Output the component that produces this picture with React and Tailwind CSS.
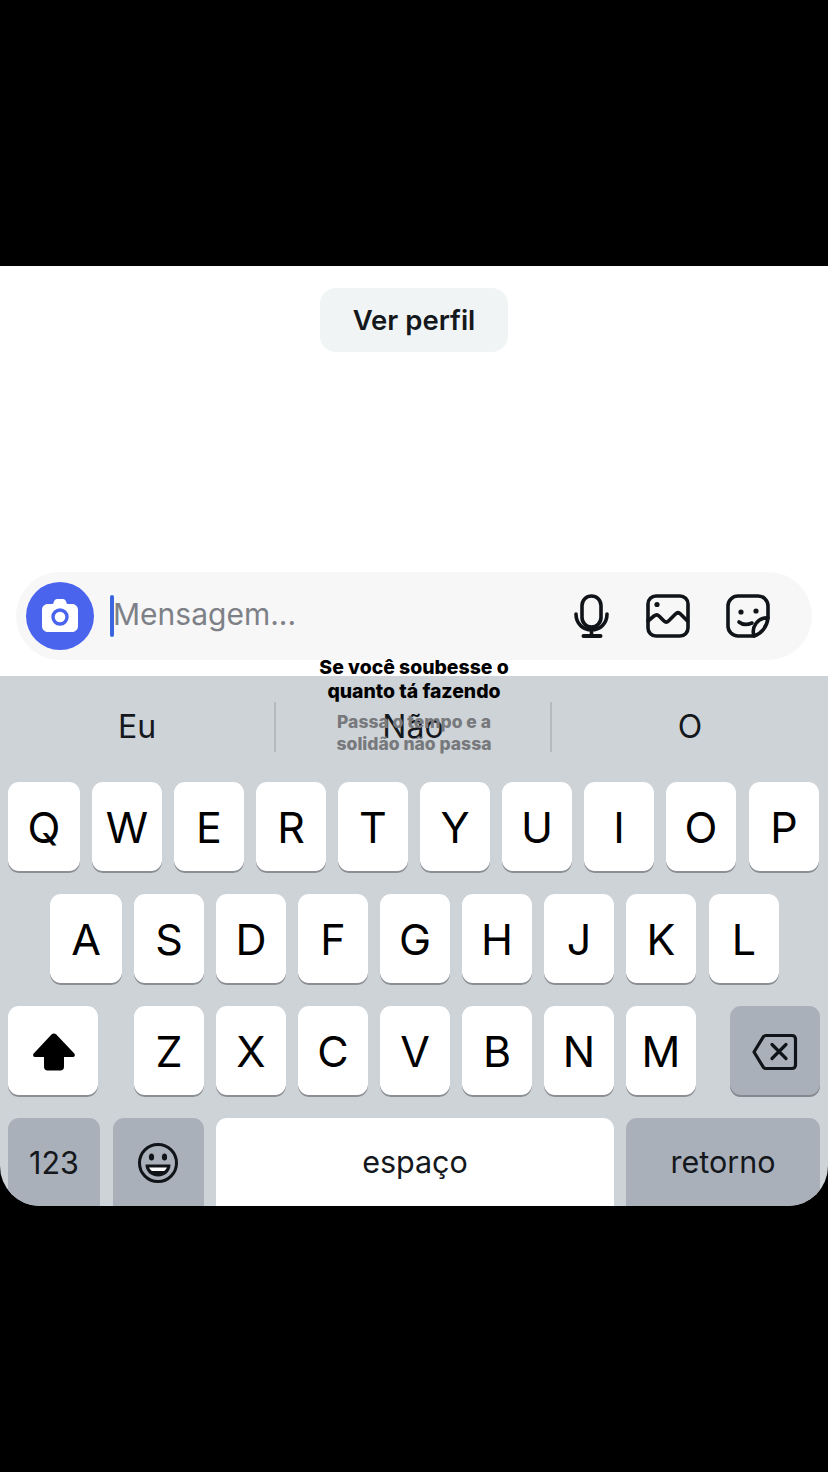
const row1 = ["W", "E", "R", "T", "Y", "U", "I", "O"];
const row2 = ["S", "D", "F", "G", "H", "J", "K"];
const row3 = ["Z", "X", "C", "V", "B", "N", "M"];

const Key = ({ label, wide }) => (
  <div className={`${wide ? "w-[72px]" : "w-[70px]"} h-[91px] flex items-center justify-center bg-white rounded-[11px] shadow-[inset_0_-2px_0_#8b8e93] text-[43px] text-black`}>
    {label}
  </div>
);

const MicIcon = () => (
  <svg width="36" height="44" viewBox="0 0 36 44" fill="none" stroke="#101418" strokeWidth="3.6" strokeLinecap="round">
    <rect x="8" y="2" width="19" height="31" rx="9.5" />
    <path d="M2 20c0 21 31 21 31 0" />
    <path d="M17.5 36v6" />
    <path d="M9.5 42h17" strokeWidth="4" />
  </svg>
);

const ImageIcon = () => (
  <svg width="44" height="44" viewBox="0 0 44 44" fill="none" stroke="#101418" strokeWidth="3.6" strokeLinecap="round" strokeLinejoin="round">
    <rect x="2" y="2" width="40" height="40" rx="8" />
    <circle cx="11" cy="10.5" r="2.6" fill="#101418" stroke="none" />
    <path d="M2 27l6-5c2-1.500 3.500-1.500 5 0l5 5c1.500 1.500 3 1.500 4.500 0l7-7c1.500-1.500 3.500-1.500 5 0l7 7" />
  </svg>
);

const StickerIcon = () => (
  <svg width="44" height="44" viewBox="0 0 44 44" fill="none" stroke="#101418" strokeWidth="3.6" strokeLinecap="round" strokeLinejoin="round">
    <path d="M28 42H12A10 10 0 0 1 2 32V12A10 10 0 0 1 12 2H32A10 10 0 0 1 42 12V24" />
    <path d="M42 24C41 33 35 40 28 42C25 33 32 23 42 24Z" />
    <circle cx="15" cy="18" r="2.6" fill="#101418" stroke="none" />
    <circle cx="30" cy="17" r="2.6" fill="#101418" stroke="none" />
    <path d="M13 28c3 2.500 8 3 13 1" />
  </svg>
);

const CameraIcon = () => (
  <svg width="38" height="36" viewBox="0 0 38 36" fill="none">
    <path d="M13 3.500C13.500 2 14.500 1 16 1h6c1.500 0 2.500 1 3 2.500L26 6h5c3.500 0 6 2.500 6 6v16c0 3.500-2.500 6-6 6H7c-3.500 0-6-2.500-6-6V12c0-3.500 2.500-6 6-6h5z" fill="#fff" />
    <circle cx="19" cy="19" r="7" stroke="#4a64ee" strokeWidth="3.4" />
  </svg>
);

const ShiftIcon = () => (
  <svg width="44" height="38" viewBox="0 0 44 38" fill="#000">
    <path d="M19.500 1.500c1.300-1.400 3.500-1.400 4.800 0l18 19c1.200 1.300 .5 3.500-1.300 3.500H32v10c0 2-1.500 3.500-3.500 3.500h-13C13.500 37.500 12 36 12 34V24H3c-1.800 0-2.500-2.200-1.300-3.500z" />
  </svg>
);

const BackspaceIcon = () => (
  <svg width="46" height="38" viewBox="0 0 46 38" fill="none" stroke="#101418" strokeWidth="3.2" strokeLinecap="round" strokeLinejoin="round">
    <path d="M14 2.500H40c2 0 3.500 1.500 3.500 3.500v26c0 2-1.500 3.500-3.500 3.500H14c-1 0-2-.5-2.700-1.300L2 19l9.300-15.200C12 3 13 2.500 14 2.500z" />
    <path d="M20 11.500l14 14M34 11.500l-14 14" />
  </svg>
);

const EmojiIcon = () => (
  <svg width="42" height="42" viewBox="0 0 42 42" fill="none">
    <circle cx="21" cy="21" r="18.500" stroke="#101418" strokeWidth="3" />
    <ellipse cx="14.500" cy="15" rx="2.600" ry="3.600" fill="#101418" />
    <ellipse cx="27.500" cy="15" rx="2.600" ry="3.600" fill="#101418" />
    <path d="M8.500 22.500h25c0 7-5.500 12-12.500 12s-12.500-5-12.500-12z" fill="#101418" />
    <path d="M12 25.500h18c-1 2-2 3-3 3.500H15c-1-.5-2-1.500-3-3.500z" fill="#fff" />
  </svg>
);

export default function App() {
  return (
    <div className="relative w-[828px] h-[1472px] bg-black overflow-hidden font-['Inter',sans-serif]">
      <div className="h-[266px]" />

      {/* chat area */}
      <div className="h-[410px] bg-white flex flex-col items-center">
        <div className="mt-[22px] w-[188px] h-[64px] flex items-center justify-center rounded-2xl bg-[#f1f4f5] pt-[2px] text-[27.5px] font-semibold text-[#14181c]">
          Ver perfil
        </div>
        <div className="mt-[220px] w-[796px] h-[88px] flex items-center rounded-full bg-[#f7f7f7] pl-[10px] pr-[42px]">
          <div className="w-[68px] h-[68px] rounded-full bg-[#4a64ee] flex items-center justify-center">
            <CameraIcon />
          </div>
          <div className="ml-4 w-1 h-[42px] rounded-full bg-[#3b66e0]" />
          <span className="flex-1 -ml-px -mt-[3px] text-[30px] text-[#7d8187]">Mensagem...</span>
          <div className="flex items-center">
            <MicIcon />
            <div className="ml-[36px]"><ImageIcon /></div>
            <div className="ml-[36px]"><StickerIcon /></div>
          </div>
        </div>
      </div>

      {/* keyboard */}
      <div className="h-[530px] bg-[#ced3d7] rounded-b-[40px] overflow-hidden">
        <div className="h-[106px] pb-1 flex items-center text-[32px] text-[#14181c]">
          <div className="w-[276px] h-[50px] flex items-center justify-center border-r-2 border-[#b6babf]">Eu</div>
          <div className="w-[276px] h-[50px] flex items-center justify-center border-r-2 border-[#b6babf]">Não</div>
          <div className="flex-1 h-[50px] flex items-center justify-center">O</div>
        </div>

        <div className="flex flex-col gap-[21px]">
          <div className="flex gap-3 pl-2">
            <Key label="Q" wide />
            {row1.map((k) => <Key key={k} label={k} />)}
            <div className="ml-px"><Key label="P" /></div>
          </div>
          <div className="flex gap-3 pl-[50px]">
            <Key label="A" wide />
            {row2.map((k) => <Key key={k} label={k} />)}
            <div className="ml-px"><Key label="L" /></div>
          </div>
          <div className="flex px-2 items-center">
            <div className="w-[90px] h-[91px] pl-px flex items-center justify-center bg-white rounded-[11px] shadow-[inset_0_-2px_0_#8b8e93]">
              <ShiftIcon />
            </div>
            <div className="flex gap-3 ml-[36px]">
              {row3.map((k) => <Key key={k} label={k} />)}
            </div>
            <div className="w-[90px] h-[91px] ml-auto flex items-center justify-center bg-[#aab0ba] rounded-[11px] shadow-[inset_0_-2px_0_#85888e]">
              <BackspaceIcon />
            </div>
          </div>
          <div className="flex px-2 text-[30.5px] text-[#14181c]">
            <div className="w-[92px] h-[88px] pt-px flex items-center justify-center bg-[#aab0ba] rounded-t-[11px]">123</div>
            <div className="ml-[13px] w-[91px] h-[88px] pr-[2px] pt-[2px] flex items-center justify-center bg-[#aab0ba] rounded-t-[11px]">
              <EmojiIcon />
            </div>
            <div className="ml-3 w-[398px] h-[88px] flex items-center justify-center bg-white rounded-t-[11px]">espaço</div>
            <div className="ml-3 flex-1 h-[88px] flex items-center justify-center bg-[#aab0ba] rounded-t-[11px]">retorno</div>
          </div>
        </div>
      </div>

      {/* story text laid over the suggestions */}
      <div className="absolute left-0 right-0 top-[655px] flex flex-col items-center text-center font-extrabold pointer-events-none">
        <p className="text-[19.4px] leading-[24px] text-black">Se você soubesse o<br />quanto tá fazendo</p>
        <p className="mt-[8px] text-[17.5px] leading-[22px] text-[#77797d]">Passa o tempo e a<br />solidão não passa</p>
      </div>
    </div>
  );
}
